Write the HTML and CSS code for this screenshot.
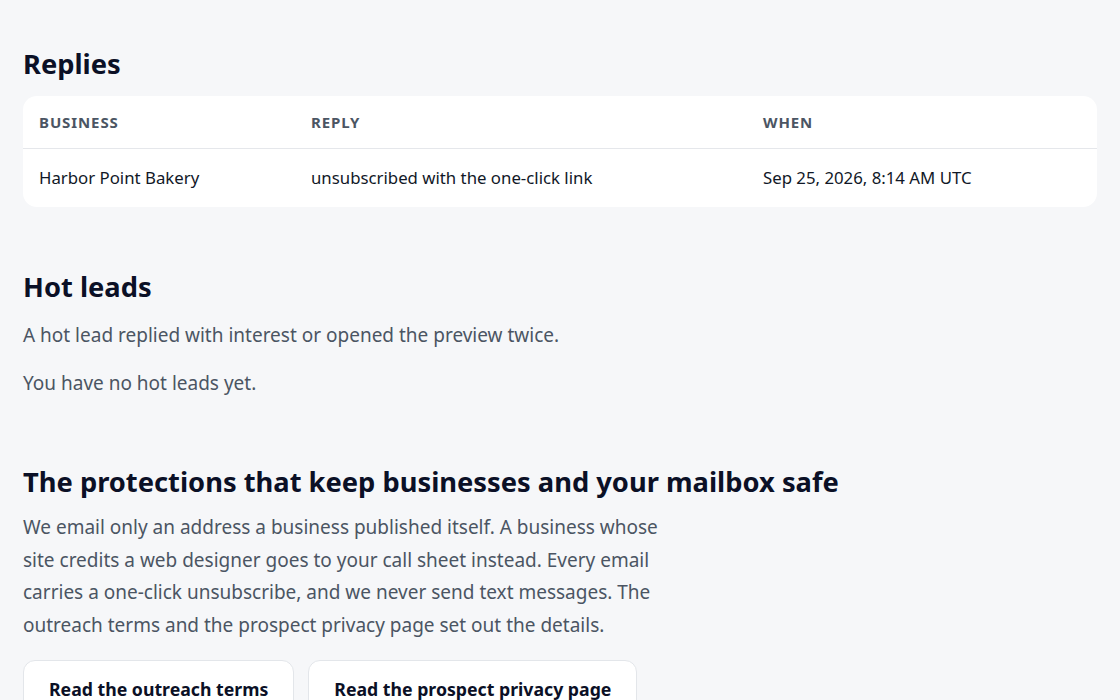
FILE: index.html
```html
<!DOCTYPE html>
<html lang="en">
<head>
<meta charset="utf-8">
<title>Replies</title>
<link rel="stylesheet" href="styles.css">
</head>
<body>
<main class="page">
  <section class="section section-replies">
    <h2 class="section-title">Replies</h2>
    <div class="card">
      <table class="table">
        <thead>
          <tr>
            <th class="col-business">Business</th>
            <th class="col-reply">Reply</th>
            <th class="col-when">When</th>
          </tr>
        </thead>
        <tbody>
          <tr>
            <td>Harbor Point Bakery</td>
            <td>unsubscribed with the one-click link</td>
            <td>Sep 25, 2026, 8:14 AM UTC</td>
          </tr>
        </tbody>
      </table>
    </div>
  </section>

  <section class="section section-hot">
    <h2 class="section-title">Hot leads</h2>
    <p class="muted">A hot lead replied with interest or opened the preview twice.</p>
    <p class="muted">You have no hot leads yet.</p>
  </section>

  <section class="section section-protect">
    <h2 class="section-title title-lg">The protections that keep businesses and your mailbox safe</h2>
    <p class="muted lead">We email only an address a business published itself. A business whose site credits a web designer goes to your call sheet instead. Every email carries a one-click unsubscribe, and we never send text messages. The outreach terms and the prospect privacy page set out the details.</p>
    <div class="actions">
      <a class="btn" href="#">Read the outreach terms</a>
      <a class="btn" href="#">Read the prospect privacy page</a>
    </div>
  </section>
</main>
</body>
</html>
```

FILE: styles.css
```css
* { box-sizing: border-box; }
html, body { margin: 0; padding: 0; }
body {
  background: #f6f7f9;
  color: #0f172a;
  font-family: "Noto Sans", "Open Sans", sans-serif;
}
.page {
  padding: 44px 23px 0 23px;
}
.section-title {
  margin: 0;
  font-size: 27.3px;
  line-height: 40px;
  font-weight: 700;
  color: #0b1026;
}
.title-lg { font-size: 27.3px; }
.section-replies .section-title { margin-bottom: 12px; }
.card {
  background: #ffffff;
  border-radius: 14px;
  overflow: hidden;
}
.table {
  width: 100%;
  border-collapse: collapse;
  font-size: 16.8px;
}
.table th {
  text-align: left;
  text-transform: uppercase;
  font-size: 15px;
  font-weight: 700;
  letter-spacing: 0.06em;
  color: #4b5563;
  padding: 16px 16px 16px;
  border-bottom: 1px solid #e5e7eb;
}
.table td {
  padding: 17px 16px 18px;
  color: #111827;
}
.col-business { width: 272px; }
.col-reply { width: 452px; }
.section-hot { margin-top: 60px; }
.muted {
  color: #4b5563;
  font-size: 19px;
  line-height: 32px;
  margin: 0;
}
.section-hot .section-title { margin-bottom: 12px; }
.section-hot .muted + .muted { margin-top: 16px; }
.section-protect { margin-top: 63px; }
.section-protect .section-title { margin-bottom: 9px; }
.lead {
  font-size: 19px;
  line-height: 32.5px;
  max-width: 640px;
}
.actions {
  display: flex;
  gap: 14px;
  margin-top: 19px;
}
.btn {
  display: inline-block;
  background: #ffffff;
  border: 1px solid #e3e6ea;
  border-radius: 12px;
  padding: 16px 25px;
  font-size: 17.7px;
  line-height: 24px;
  font-weight: 700;
  color: #0b1026;
  text-decoration: none;
}
```
